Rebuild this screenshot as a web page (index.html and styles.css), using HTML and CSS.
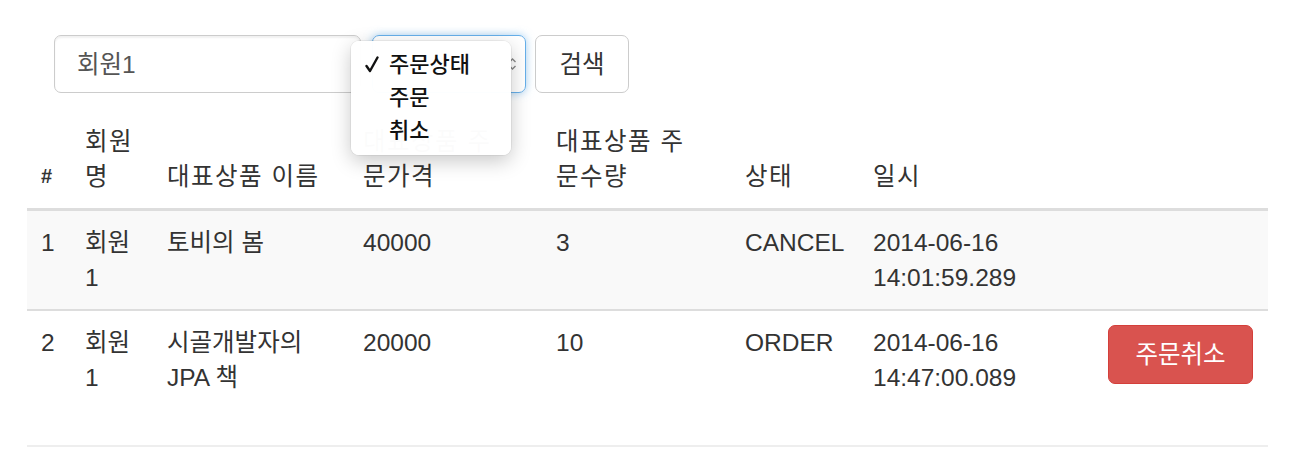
FILE: index.html
```html
<!DOCTYPE html>
<html lang="ko">
<head>
<meta charset="utf-8">
<title>주문 목록</title>
<link rel="stylesheet" href="styles.css">
</head>
<body>
<div class="page">
  <form class="search-form">
    <div class="input">회원1</div>
    <div class="select-wrap">
      <div class="select">
        <svg class="select-arrow" width="9" height="14" viewBox="0 0 9 14"><path d="M1.5 5 L4.5 2 L7.5 5 M1.5 9 L4.5 12 L7.5 9" fill="none" stroke="#888" stroke-width="1.4"/></svg>
      </div>
      <div class="menu">
        <div class="menu-item"><span class="check"><svg width="14" height="17" viewBox="0 0 14 17"><path d="M1.5 10 L5 15 L12.5 1.5" fill="none" stroke="#111" stroke-width="2.4" stroke-linecap="round" stroke-linejoin="round"/></svg></span><span>주문상태</span></div>
        <div class="menu-item"><span class="check"></span><span>주문</span></div>
        <div class="menu-item"><span class="check"></span><span>취소</span></div>
      </div>
    </div>
    <div class="btn btn-default">검색</div>
  </form>

  <table class="orders">
    <colgroup>
      <col class="c1"><col class="c2"><col class="c3"><col class="c4"><col class="c5"><col class="c6"><col class="c7"><col class="c8">
    </colgroup>
    <thead>
      <tr>
        <th><b>#</b></th>
        <th>회원<br>명</th>
        <th>대표상품 이름</th>
        <th>대표상품 주<br>문가격</th>
        <th>대표상품 주<br>문수량</th>
        <th>상태</th>
        <th>일시</th>
        <th></th>
      </tr>
    </thead>
    <tbody>
      <tr class="striped">
        <td>1</td>
        <td>회원<br>1</td>
        <td>토비의 봄</td>
        <td>40000</td>
        <td>3</td>
        <td>CANCEL</td>
        <td>2014-06-16<br>14:01:59.289</td>
        <td></td>
      </tr>
      <tr>
        <td>2</td>
        <td>회원<br>1</td>
        <td>시골개발자의<br>JPA 책</td>
        <td>20000</td>
        <td>10</td>
        <td>ORDER</td>
        <td>2014-06-16<br>14:47:00.089</td>
        <td><div class="cancel-wrap"><div class="btn btn-danger">주문취소</div></div></td>
      </tr>
    </tbody>
  </table>
</div>
</body>
</html>
```

FILE: styles.css
```css
html, body {
  margin: 0;
  padding: 0;
  background: #fff;
}

body {
  font-family: "Liberation Sans", "Noto Sans CJK KR", sans-serif;
  font-size: 24.5px;
  line-height: 35px;
  color: #333;
}

.page {
  padding: 35px 23px 0 27px;
}

.search-form {
  display: flex;
  align-items: flex-start;
  margin-left: 27px;
  height: 58px;
  position: relative;
  z-index: 5;
}

.input {
  box-sizing: border-box;
  width: 307px;
  height: 58px;
  border: 1.5px solid #ccc;
  border-radius: 7px;
  padding: 0 22px;
  display: flex;
  align-items: center;
  color: #555;
  box-shadow: inset 0 2px 2px rgba(0, 0, 0, 0.06);
}

.select-wrap {
  position: relative;
  margin-left: 11px;
}

.select {
  box-sizing: border-box;
  width: 154px;
  height: 58px;
  border: 1.5px solid #66afe9;
  border-radius: 7px;
  box-shadow: 0 0 8px rgba(102, 175, 233, 0.6);
  display: flex;
  align-items: center;
  justify-content: flex-end;
  padding: 0 8px 0 20px;
  color: #555;
}

.select-arrow {
  display: block;
}

.menu {
  position: absolute;
  z-index: 10;
  left: -21px;
  top: 6px;
  width: 160px;
  height: 114px;
  box-sizing: border-box;
  padding: 7px 0 0 0;
  background: rgba(255, 255, 255, 0.985);
  border-radius: 8px;
  box-shadow: 0 6px 20px rgba(0, 0, 0, 0.22), 0 0 0 1px rgba(0, 0, 0, 0.05);
}

.menu-item {
  display: flex;
  align-items: center;
  height: 33px;
  font-size: 22px;
  line-height: 33px;
  color: #111;
  font-weight: 500;
}

.check {
  width: 38px;
  padding-left: 14px;
  box-sizing: border-box;
  display: flex;
  align-items: center;
}

.check svg {
  display: block;
}

.btn {
  box-sizing: border-box;
  height: 59px;
  border: 1.5px solid #ccc;
  border-radius: 7px;
  padding: 0 21px;
  display: flex;
  align-items: center;
  justify-content: center;
  white-space: nowrap;
}

.btn-default {
  margin-left: 9px;
  width: 94px;
  height: 58px;
  color: #333;
  background: #fff;
}

.btn-danger {
  width: 145px;
  background: #d9534f;
  border-color: #d43f3a;
  color: #fff;
}

.orders {
  margin-top: 17px;
  width: 1241px;
  border-collapse: collapse;
  table-layout: fixed;
  border-bottom: 2px solid #eee;
}

.c1 { width: 44px; }
.c2 { width: 82px; }
.c3 { width: 196px; }
.c4 { width: 193px; }
.c5 { width: 189px; }
.c6 { width: 128px; }
.c7 { width: 235px; }
.c8 { width: 174px; }

.orders th,
.orders td {
  padding: 14px;
  text-align: left;
  vertical-align: top;
}

.orders th {
  font-weight: normal;
  vertical-align: bottom;
  letter-spacing: 1.5px;
  border-bottom: 3.5px solid #ddd;
}

.orders th b {
  font-family: "Liberation Sans", sans-serif;
  font-size: 20px;
}

.orders td {
  border-top: 2px solid #ddd;
}

.orders tbody tr:first-child td {
  border-top: none;
}

.striped td {
  background: #f9f9f9;
}

.cancel-wrap {
  height: 106px;
}
```
